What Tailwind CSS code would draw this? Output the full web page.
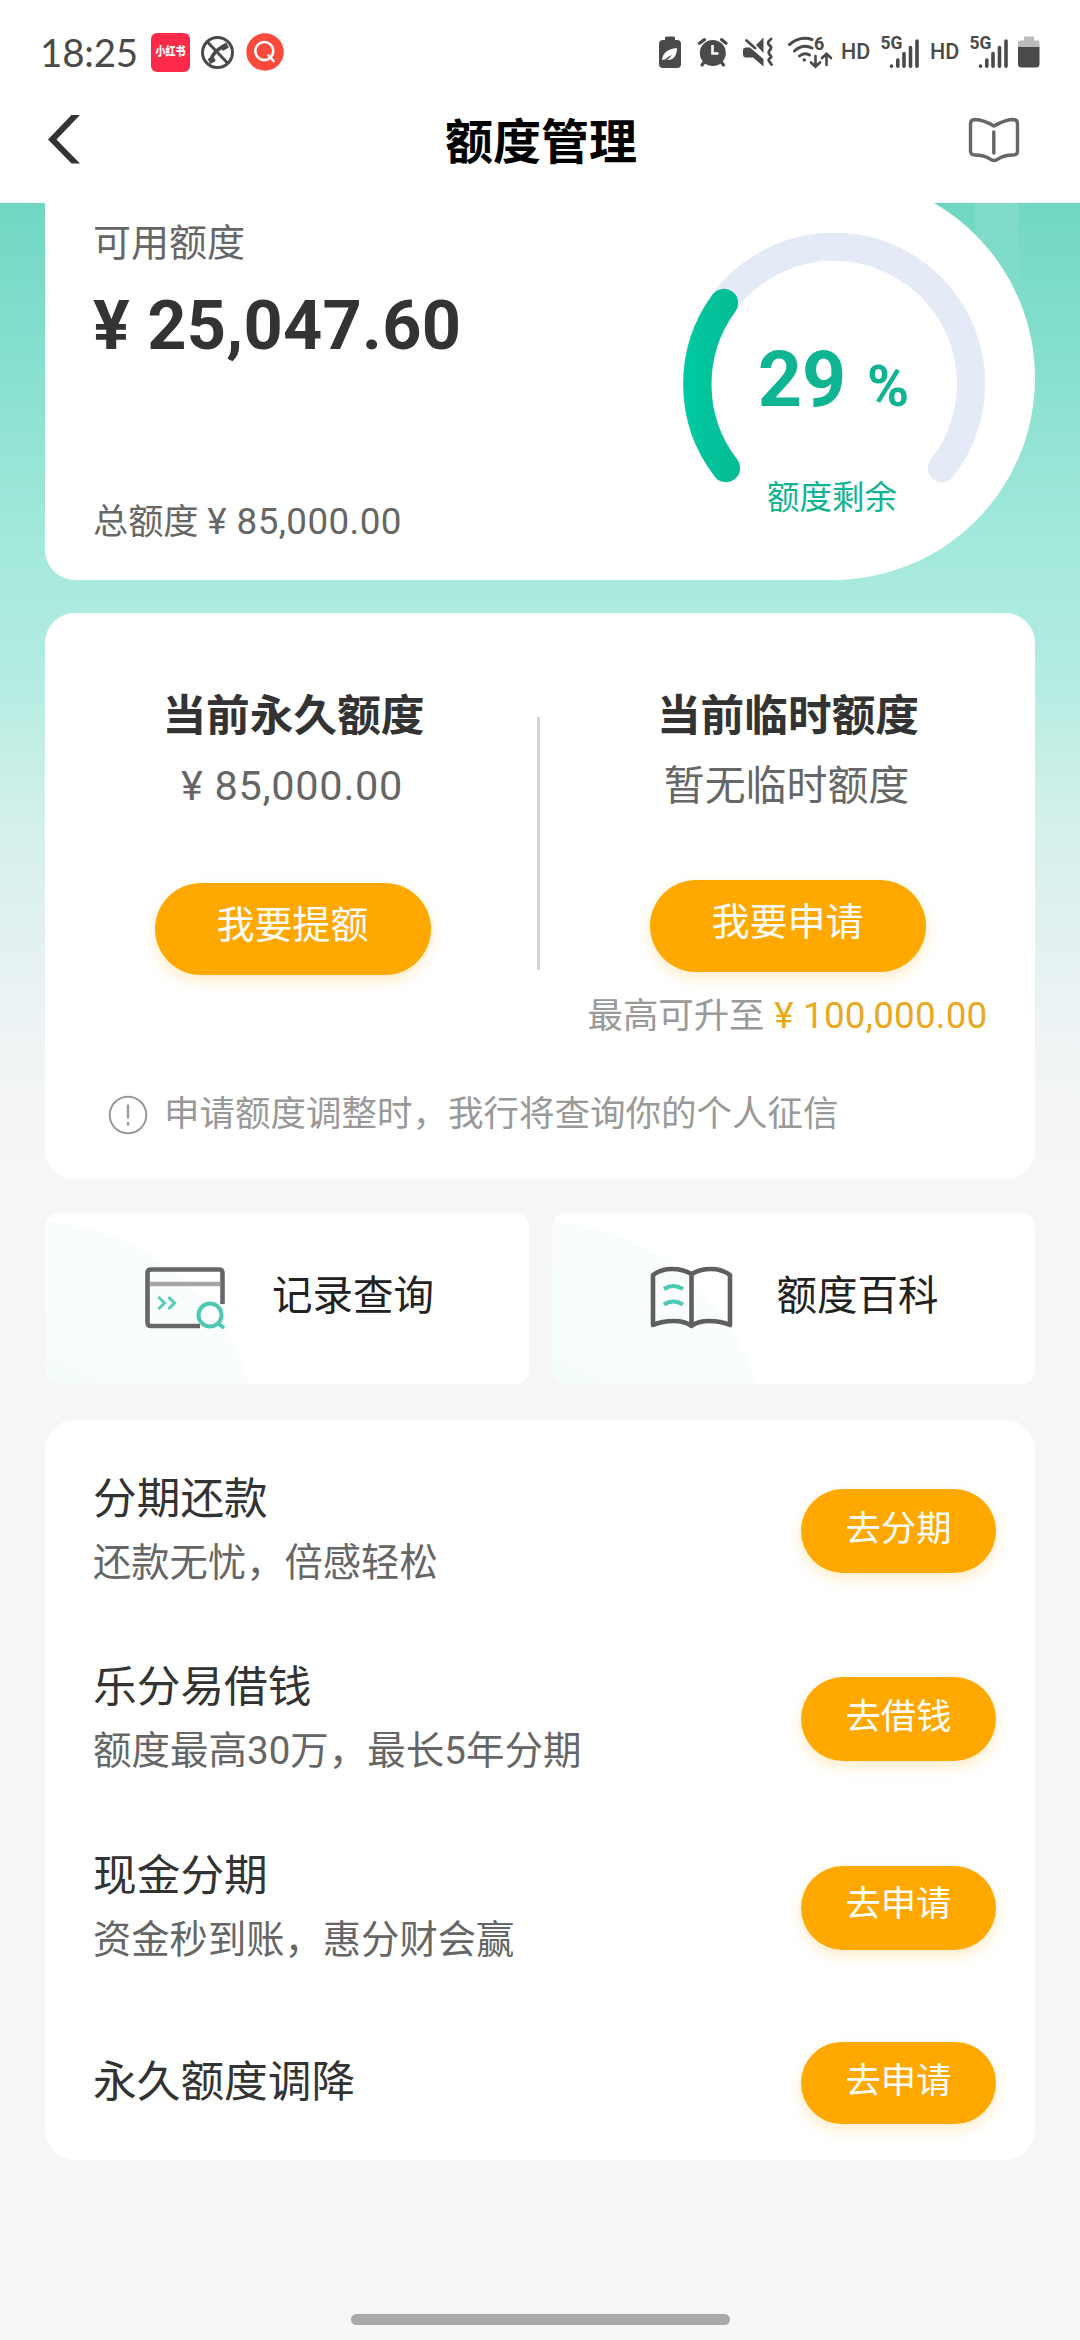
<!DOCTYPE html>
<html lang="zh-CN">
<head>
<meta charset="utf-8">
<title>额度管理</title>
<script src="https://cdn.jsdelivr.net/npm/@tailwindcss/browser@4"></script>
</head>
<body class="w-[1080px] h-[2340px] overflow-hidden flex flex-col bg-[#f6f6f6] font-['Roboto','Noto_Sans_CJK_SC',sans-serif] text-[#333]">

<header class="h-[203px] shrink-0 bg-white flex flex-col">
  <!-- status bar -->
  <div class="h-[104px] pl-[40px] pr-[40px] flex items-center justify-between">
    <div class="flex items-center">
      <span class="w-[111px] text-[38.500px] leading-[40px] text-[#4a4a4a] font-['Lato','Roboto',sans-serif] tracking-[-0.2px]">18:25</span>
      <span class="w-[39px] h-[39px] rounded-[6px] bg-[#fd2a49] text-white text-[10px] leading-[38px] font-black text-center whitespace-nowrap"><span class="inline-block leading-[14px] scale-y-125">小红书</span></span>
      <svg class="ml-[10px]" width="35" height="35" viewBox="200 35 35 35" fill="none" stroke="#4a4a4a">
        <circle cx="217.500" cy="52.500" r="15" stroke-width="3"/>
        <path d="M207 41.500L228 63.500" stroke-width="3"/>
        <path d="M211 60.500C212 54 219 47 225.500 46.500" stroke-width="3.600"/>
        <path d="M209 61.500l5.500-3M221.500 48.500l6-3.500" stroke-width="5.500"/>
      </svg>
      <svg class="ml-[11px]" width="38" height="38" viewBox="0 0 38 38" fill="none" stroke="#fff" stroke-width="2.600" stroke-linecap="round">
        <circle cx="19" cy="19" r="18.700" fill="#fa4a3c" stroke="none"/>
        <circle cx="18.300" cy="18" r="9"/><path d="M22.500 22.500L27.500 28"/>
      </svg>
    </div>
    <div class="flex items-center text-[#4a4a4a] text-[21.500px] leading-[24px] font-medium">
      <svg width="22" height="32" viewBox="659 36 22 32" fill="#4a4a4a">
        <rect x="659" y="40" width="22" height="28" rx="4"/><rect x="665" y="36.500" width="10" height="6" rx="1.500"/>
        <path d="M662 60c1-7 5-11 15-12c0 8-4 12.500-10 12c2-2 4-3 5-5c-3 1-5 3-7 4.500z" fill="#fff"/>
      </svg>
      <svg class="ml-[16px]" width="32" height="32" viewBox="697 36 32 32" fill="none" stroke="#4a4a4a" stroke-width="3.200" stroke-linecap="round">
        <circle cx="712.800" cy="53" r="13" fill="#4a4a4a" stroke="none"/>
        <path d="M699.500 43.200L704.500 39.600M721.500 39.600L726 43.200M702 65l3-4M723.500 65l-3-4"/>
        <path d="M712.500 45v8.500h6" stroke="#fff" stroke-width="2.600" stroke-linecap="butt"/>
      </svg>
      <svg class="ml-[13px]" width="33" height="32" viewBox="742 36 33 32" fill="#4a4a4a">
        <path d="M746 47.500h4L763.500 59v7.500L753 57.500h-7q-3 0-3-3v-4q0-3 3-3zM756 45l7.500-7.500V53z"/>
        <path d="M746.500 40.500L755 48M771 39c-6 5-1 6 0 8c1 3-5 4-1 8c4 3-3 3-1 6l2.500 3.500" fill="none" stroke="#4a4a4a" stroke-width="2.800" stroke-linecap="round"/>
      </svg>
      <svg class="ml-[12px] overflow-visible" width="46" height="40" viewBox="787 32 46 40" fill="none" stroke="#4a4a4a" stroke-width="3" stroke-linecap="round">
        <path d="M789.500 44.500Q800 35.500 812 39.500M794.500 51Q803 43.500 812 48M799.500 56Q804 52 809.500 55"/>
        <circle cx="804.300" cy="60" r="1.800" fill="#4a4a4a" stroke="none"/>
        <path d="M815.500 56v10.500M811 62.500l4.500 4.300l4.500-4.300M826.500 65V54M822 58l4.500-4.300l4.500 4.300" stroke-width="2.600"/>
        <text x="814" y="50" fill="#4a4a4a" stroke="none" font-size="18" font-weight="700">6</text>
      </svg>
      <span class="ml-[8px] w-[27px]">HD</span>
      <svg class="ml-[12px] overflow-visible" width="40" height="40" viewBox="880 32 40 40" fill="none" stroke="#4a4a4a" stroke-width="3.600" stroke-linecap="round">
        <text x="880.500" y="48.700" fill="#4a4a4a" stroke="none" font-size="17.500" font-weight="700">5G</text>
        <path d="M891.500 66v.2M897.800 60v6.200M904 53.500v12.700M910.500 47.500v18.700M917 41v25.200"/>
      </svg>
      <span class="ml-[10px] w-[27px]">HD</span>
      <svg class="ml-[12px] overflow-visible" width="40" height="40" viewBox="880 32 40 40" fill="none" stroke="#4a4a4a" stroke-width="3.600" stroke-linecap="round">
        <text x="880.500" y="48.700" fill="#4a4a4a" stroke="none" font-size="17.500" font-weight="700">5G</text>
        <path d="M891.500 66v.2M897.800 60v6.200M904 53.500v12.700M910.500 47.500v18.700M917 41v25.200"/>
      </svg>
      <svg class="ml-[9px]" width="22" height="32" viewBox="1019 36 22 32" fill="#bbb">
        <path d="M1025 36.500h10v4h4q1.500 0 1.500 2v5h-21.500v-5q0-2 2-2h4z"/>
        <path d="M1019 47h21.500v17q0 3.500-3.500 3.500h-14.500q-3.500 0-3.500-3.500z" fill="#4a4a4a"/>
      </svg>
    </div>
  </div>
  <!-- title bar -->
  <div class="h-[99px] px-[46px] pb-[27px] grid grid-cols-[100px_1fr_100px] items-center">
    <svg width="36" height="52" viewBox="46 114 36 52" fill="#333"><path d="M71.500 115H80L56.500 139.500L80 163.500H71.500L48 139.500z"/></svg>
    <h1 class="pt-[5px] pl-[2px] text-center text-[48px] leading-[56px] font-bold text-black">额度管理</h1>
    <svg class="justify-self-end mr-[13px]" width="54" height="48" viewBox="966 116 54 48" fill="none" stroke="#666" stroke-width="3.400" stroke-linecap="round" stroke-linejoin="round">
      <path d="M993 126Q983 120 974 119.500Q969.500 119.500 969.500 124V151Q969.500 155 974 155Q983 155 989 159Q993 162 997 159Q1003 155 1012 155Q1016.500 155 1016.500 151V124Q1016.500 119.500 1012 119.500Q1003 120 993 126z"/>
      <path d="M992.800 132v21"/>
    </svg>
  </div>
</header>

<main class="flex-1 min-h-0 overflow-hidden px-[45px] flex flex-col [background:linear-gradient(180deg,#ffffff1c,#ffffff00)_975px_0/44px_100px_no-repeat,linear-gradient(180deg,#70d7c3_0px,#8ae1d0_180px,#a9eade_380px,#b3ece1_470px,#d2f0ea_610px,#e5f1f3_750px,#f1f4f5_860px,#f6f6f6_960px)]">

  <!-- available limit -->
  <section class="-mt-[27px] h-[404px] shrink-0 bg-white rounded-l-[30px] rounded-r-[202px] pl-[48px] pr-[50px] flex justify-between">
    <div class="pt-[47px] pb-[38px] flex flex-col text-[#666]">
      <p class="text-[38px] leading-[40px]">可用额度</p>
      <p class="mt-[23px] text-[68.500px] leading-[80px] tracking-[0.25px] font-bold text-[#333] whitespace-nowrap">¥ 25,047.60</p>
      <p class="mt-auto text-[35.200px] leading-[40px] whitespace-nowrap">总额度 <span class="text-[36.800px] tracking-[0.4px]">¥ 85,000.00</span></p>
    </div>
    <div class="relative w-[302px] mt-[57px] h-[302px]">
      <svg width="302" height="302" viewBox="683 233 302 302" fill="none" stroke-width="28.300" stroke-linecap="round">
        <defs><linearGradient id="g" gradientUnits="userSpaceOnUse" x1="683" y1="0" x2="740" y2="0"><stop offset="0" stop-color="#00caa3"/><stop offset="1" stop-color="#06bb93"/></linearGradient></defs>
        <path d="M726 468A137 137 0 1 1 942 468" stroke="#e5eaf7"/>
        <path d="M726 468A137 137 0 0 1 724 303" stroke="url(#g)"/>
      </svg>
      <div class="absolute inset-0 pt-[107px] pr-[4px] flex flex-col items-center text-[#0fb592]">
        <p class="pl-[3px] flex items-baseline gap-[21px] font-bold leading-[80px]"><span class="text-[77px]">29</span><span class="text-[57px]">%</span></p>
        <p class="mt-[51px] text-[32.500px] leading-[40px]">额度剩余</p>
      </div>
    </div>
  </section>

  <!-- permanent / temporary limit -->
  <section class="mt-[33px] h-[566px] shrink-0 bg-white rounded-[30px] pt-[78px] flex flex-col">
    <div class="flex h-[355px]">
      <div class="w-[492px] pl-[3px] flex flex-col items-center">
        <h2 class="text-[43.700px] leading-[50px] font-bold pl-[2px]">当前永久额度</h2>
        <p class="mt-[22px] text-[41.500px] tracking-[0.700px] leading-[46px] text-[#666] pr-[1px]">¥ 85,000.00</p>
        <button class="mt-[74px] w-[276px] h-[92px] pb-[8px] rounded-full bg-[#ffa800] text-white text-[38px] leading-[84px] shadow-[0_6px_14px_rgba(255,168,0,0.22)]">我要提额</button>
      </div>
      <div class="w-[3px] h-[253px] mt-[26px] bg-[#d4d4d4]"></div>
      <div class="w-[495px] flex flex-col items-center">
        <h2 class="text-[43.700px] leading-[50px] font-bold pl-[1px]">当前临时额度</h2>
        <p class="mt-[22px] text-[40.900px] leading-[46px] text-[#666] pr-[2px]">暂无临时额度</p>
        <button class="mt-[71px] w-[276px] h-[92px] pb-[8px] rounded-full bg-[#ffa800] text-white text-[38px] leading-[84px] shadow-[0_6px_14px_rgba(255,168,0,0.22)]">我要申请</button>
        <p class="mt-[24px] text-[35.400px] leading-[40px] text-[#999] whitespace-nowrap">最高可升至 <span class="ml-[1px] text-[36.800px] tracking-[0.200px] text-[#e9a820]">¥ 100,000.00</span></p>
      </div>
    </div>
    <div class="pl-[63px] mt-[46px] flex items-center gap-[16px] text-[#999]">
      <svg class="mt-[3px]" width="40" height="40" viewBox="0 0 40 40" fill="none" stroke="#999" stroke-width="2"><circle cx="20" cy="20" r="18.300"/><path d="M20 9.500v14M20 27v3.500" stroke-width="2.400"/></svg>
      <p class="text-[35.500px] leading-[40px]">申请额度调整时，我行将查询你的个人征信</p>
    </div>
  </section>

  <!-- shortcuts -->
  <section class="mt-[34px] h-[171px] shrink-0 grid grid-cols-2 gap-[23px] text-[#222] text-[40.500px] leading-[48px]">
    <div class="rounded-[14px] bg-white flex items-center pb-[3px] pl-[98px] gap-[45px] bg-[radial-gradient(circle_at_-15px_237px,#f3fbfb_0px,#f8fdfd_160px,#fafdfd_228px,#ffffff_230px)]">
      <svg width="84" height="64" viewBox="143 1265 84 64" fill="none" stroke="#666" stroke-width="4.600">
        <path d="M200 1326H151q-3.500 0-3.500-3.500V1273q0-3.500 3.500-3.500h68q3.500 0 3.500 3.500v31"/>
        <path d="M150 1284h70" stroke="#a5a5a5"/>
        <path d="M158.500 1297l6 6l-6 6M168.500 1297l6 6l-6 6" stroke="#55ccb5" stroke-width="3"/>
        <circle cx="210" cy="1315" r="11.500" stroke="#4cc9b0" stroke-width="4"/><path d="M218 1323l6 5" stroke="#4cc9b0" stroke-width="4"/>
      </svg>
      <span class="pb-[2px]">记录查询</span>
    </div>
    <div class="rounded-[14px] bg-white flex items-center pb-[3px] pl-[97px] gap-[44px] bg-[radial-gradient(circle_at_-15px_237px,#f3fbfb_0px,#f8fdfd_160px,#fafdfd_228px,#ffffff_230px)]">
      <svg width="84" height="64" viewBox="649 1265 84 64" fill="none" stroke="#5f5f5f" stroke-width="4.600" stroke-linejoin="round">
        <path d="M691.500 1274Q683 1269 672 1269Q661 1269 653 1275V1325Q662 1321 674 1321Q685 1321 691.500 1326Q698 1321 709 1321Q721 1321 730 1325V1275Q722 1269 711 1269Q700 1269 691.500 1274V1325"/>
        <path d="M664 1289q9-6 19 0M664 1304.500q9-6 19 0" stroke="#4cc9b0" stroke-width="4"/>
      </svg>
      <span class="pb-[2px]">额度百科</span>
    </div>
  </section>

  <!-- services -->
  <section class="mt-[36px] h-[740px] shrink-0 rounded-[30px] bg-white pl-[48px] pr-[39px] flex flex-col">
    <div class="h-[189px] shrink-0 mt-[16px] flex items-center justify-between">
      <div class="pb-[3px]"><h3 class="text-[43.700px] leading-[50px]">分期还款</h3><p class="mt-[17px] text-[38.300px] leading-[44px] text-[#666]">还款无忧，倍感轻松</p></div>
      <button class="w-[195px] h-[84px] pb-[4px] rounded-full bg-[#ffa800] text-white text-[35.300px] leading-[80px] shadow-[0_6px_14px_rgba(255,168,0,0.22)]">去分期</button>
    </div>
    <div class="h-[188px] shrink-0 flex items-center justify-between">
      <div class="pb-[3px]"><h3 class="text-[43.700px] leading-[50px]">乐分易借钱</h3><p class="mt-[17px] text-[38.500px] leading-[44px] text-[#666]">额度最高30万，最长5年分期</p></div>
      <button class="w-[195px] h-[84px] pb-[4px] rounded-full bg-[#ffa800] text-white text-[35.300px] leading-[80px] shadow-[0_6px_14px_rgba(255,168,0,0.22)]">去借钱</button>
    </div>
    <div class="h-[189px] shrink-0 flex items-center justify-between">
      <div class="pb-[3px]"><h3 class="text-[43.700px] leading-[50px]">现金分期</h3><p class="mt-[17px] text-[38.300px] leading-[44px] text-[#666]">资金秒到账，惠分财会赢</p></div>
      <button class="w-[195px] h-[84px] pb-[8px] rounded-full bg-[#ffa800] text-white text-[35.300px] leading-[76px] shadow-[0_6px_14px_rgba(255,168,0,0.22)]">去申请</button>
    </div>
    <div class="h-[162px] -mb-[4px] shrink-0 flex items-center justify-between">
      <h3 class="pb-[3px] text-[43.700px] leading-[50px]">永久额度调降</h3>
      <button class="w-[195px] h-[82px] pb-[4px] rounded-full bg-[#ffa800] text-white text-[35.300px] leading-[78px] shadow-[0_6px_14px_rgba(255,168,0,0.22)]">去申请</button>
    </div>
  </section>

  <div class="mt-auto mb-[15px] self-center w-[379px] h-[11px] shrink-0 rounded-full bg-[#a9a9a9]"></div>
</main>
</body>
</html>
